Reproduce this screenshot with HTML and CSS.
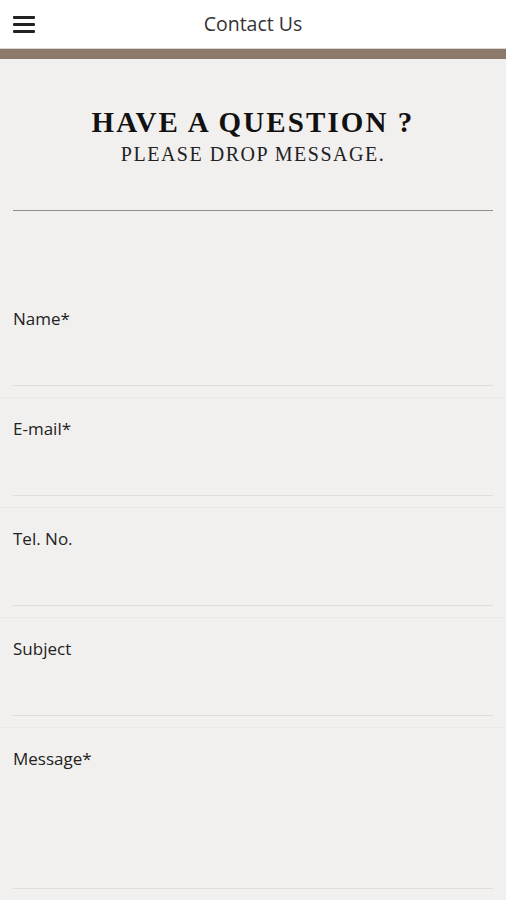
FILE: index.html
```html
<!DOCTYPE html>
<html lang="en">
<head>
<meta charset="utf-8">
<title>Contact Us</title>
<link rel="stylesheet" href="styles.css">
</head>
<body>
<header class="topbar">
  <button class="menu-btn" aria-label="Menu">
    <svg width="22" height="18" viewBox="0 0 22 18"><rect x="0" y="0" width="22" height="3" rx="1" fill="#222"/><rect x="0" y="7" width="22" height="3" rx="1" fill="#222"/><rect x="0" y="14" width="22" height="3" rx="1" fill="#222"/></svg>
  </button>
  <h1 class="topbar-title">Contact Us</h1>
</header>
<div class="accent-bar"></div>
<main class="content">
  <section class="intro">
    <h2 class="intro-title">HAVE A QUESTION ?</h2>
    <p class="intro-sub">PLEASE DROP MESSAGE.</p>
  </section>
  <hr class="divider">
  <form class="form">
    <div class="field">
      <label class="field-label" for="name">Name*</label>
      <input class="field-input" id="name" type="text">
    </div>
    <div class="field">
      <label class="field-label" for="email">E-mail*</label>
      <input class="field-input" id="email" type="email">
    </div>
    <div class="field">
      <label class="field-label" for="tel">Tel. No.</label>
      <input class="field-input" id="tel" type="tel">
    </div>
    <div class="field">
      <label class="field-label" for="subject">Subject</label>
      <input class="field-input" id="subject" type="text">
    </div>
    <div class="field field-last">
      <label class="field-label" for="message">Message*</label>
      <textarea class="field-input field-textarea" id="message"></textarea>
    </div>
  </form>
</main>
</body>
</html>
```
FILE: styles.css
```css
* { box-sizing: border-box; }
html, body { margin: 0; padding: 0; }
body {
  background: #f1f0ef;
  font-family: "Open Sans", "Noto Sans", sans-serif;
  color: #222;
  width: 506px;
  height: 900px;
  overflow: hidden;
}
.topbar {
  height: 49px;
  background: #fff;
  border-bottom: 1px solid #d8d5d2;
  display: flex;
  align-items: center;
  justify-content: center;
  position: relative;
}
.menu-btn {
  position: absolute;
  left: 13px;
  top: 16px;
  padding: 0;
  margin: 0;
  border: 0;
  background: none;
  display: flex;
}
.topbar-title {
  margin: 0;
  font-size: 19.5px;
  font-weight: 400;
  color: #333;
  line-height: 1;
  padding-bottom: 1px;
}
.accent-bar {
  height: 10px;
  background: #8b7a6c;
}
.content {
  padding: 0 13px;
}
.intro {
  padding-top: 46px;
  text-align: center;
}
.intro-title {
  margin: 0;
  font-family: "Liberation Serif", "Times New Roman", serif;
  font-weight: 700;
  font-size: 29px;
  line-height: 34px;
  letter-spacing: 2.1px;
  color: #111;
}
.intro-sub {
  margin: 0;
  padding-top: 3px;
  font-family: "Liberation Serif", "Times New Roman", serif;
  font-size: 20px;
  line-height: 24px;
  letter-spacing: 1.5px;
  color: #222;
}
.divider {
  margin: 44px 0 0;
  border: 0;
  border-top: 1px solid #8f8f8f;
  height: 0;
}
.form {
  margin: 77px -13px 0;
  display: flex;
  flex-direction: column;
}
.field {
  padding: 20px 13px 11px;
  border-bottom: 1px solid #ebe9e7;
  display: flex;
  flex-direction: column;
}
.field-last { border-bottom: 0; }
.field-label {
  font-size: 17px;
  line-height: 22px;
  color: #222;
}
.field-input {
  height: 56px;
  border: 0;
  border-bottom: 1px solid #e0dedc;
  background: transparent;
  font: inherit;
  outline: none;
  padding: 0;
}
.field-textarea {
  height: 119px;
  resize: none;
}
```
